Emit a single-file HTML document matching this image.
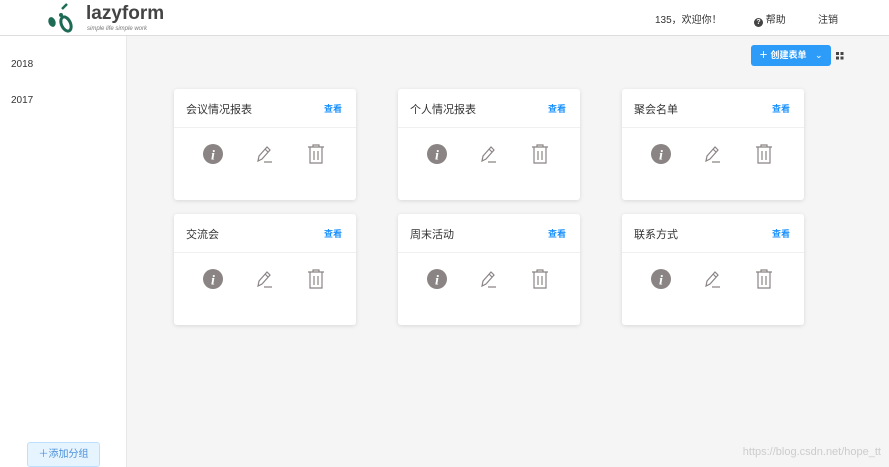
<!DOCTYPE html>
<html><head><meta charset="utf-8"><style>
*{margin:0;padding:0;box-sizing:border-box}
body{width:889px;height:467px;overflow:hidden;background:#f5f5f5;font-family:"Liberation Sans","Noto Sans CJK SC",sans-serif;position:relative;color:#333}
.hdr{position:absolute;left:0;top:0;width:889px;height:36px;background:#fff;border-bottom:1px solid #ddd}
.side{position:absolute;left:0;top:36px;width:127px;height:431px;background:#fff;border-right:1px solid #e8e8e8}
.side div{position:absolute;left:11px;font-size:10px;color:#333}
.card{position:absolute;width:182px;height:111px;background:#fff;border-radius:3px;box-shadow:0 1px 4px rgba(0,0,0,.12)}
.card .t{position:absolute;left:12px;top:12px;font-size:11px;color:#333}
.card .v{position:absolute;right:14px;top:13px;font-size:9px;color:#1890ff;font-weight:bold}
.card .ln{position:absolute;left:0;right:0;top:38px;border-top:1px solid #f0f0f0}
.card svg{position:absolute;left:0;top:0}
</style></head><body>
<div class="hdr">
<svg style="position:absolute;left:46px;top:2px" width="30" height="32" viewBox="0 0 30 32">
<ellipse cx="6" cy="20" rx="3.5" ry="5" fill="#1d6b55" transform="rotate(-20 6 20)"/>
<ellipse cx="20" cy="22" rx="4.5" ry="7.5" fill="none" stroke="#1d6b55" stroke-width="3" transform="rotate(-25 20 22)"/>
<circle cx="15" cy="13" r="2" fill="#1d6b55"/>
<path d="M16 7 L21 2" stroke="#1d6b55" stroke-width="2.5"/>
</svg>
<div style="position:absolute;left:86px;top:3px;font-size:19px;font-weight:bold;color:#444">lazyform</div>
<div style="position:absolute;left:87px;top:26px;font-size:6px;color:#777;font-style:italic">simple life simple work</div>
<div style="position:absolute;left:655px;top:11px;font-size:10px;color:#333">135，欢迎你！</div>
<div style="position:absolute;left:754px;top:11px;font-size:10px;color:#333"><span style="display:inline-block;width:9px;height:9px;border-radius:50%;background:#444;color:#fff;font-size:7px;text-align:center;line-height:9px;vertical-align:-1px;font-weight:bold">?</span> 帮助</div>
<div style="position:absolute;left:818px;top:11px;font-size:10px;color:#333">注销</div>
</div>
<div class="side"><div style="top:23px">2018</div><div style="top:59px">2017</div>
<div style="left:27px;top:406px;width:73px;height:25px;background:#e6f4ff;border:1px solid #bde0ff;border-radius:3px;color:#4a90d9;font-size:10px;text-align:center;line-height:23px">＋添加分组</div></div>
<div style="position:absolute;left:751px;top:45px;width:80px;height:21px;background:#2d9bf8;border-radius:3px;color:#fff;font-size:9px;font-weight:bold;line-height:21px;padding-left:8px">＋ 创建表单 <span style="font-weight:normal;margin-left:6px">⌄</span></div>
<svg style="position:absolute;left:836px;top:52px" width="8" height="8"><rect x="0" y="0" width="3" height="3" fill="#444"/><rect x="4.5" y="0" width="3" height="3" fill="#444"/><rect x="0" y="4.5" width="3" height="3" fill="#444"/><rect x="4.5" y="4.5" width="3" height="3" fill="#444"/></svg>

<div class="card" style="left:174px;top:89px"><div class="t">会议情况报表</div><div class="v">查看</div><div class="ln"></div>
<svg width="182" height="111"><circle cx="39" cy="65" r="10" fill="#8a8584"/><text x="39" y="70.5" font-size="14" font-weight="bold" font-style="italic" fill="#fff" text-anchor="middle" font-family="Liberation Serif">i</text>
<g fill="none" stroke="#8a8584" stroke-width="1.2"><path d="M84 72 L85 67 L93 58 L96 61 L88 70 Z M91 60 L94 63 M90 73 L98 73"/><path d="M134 58 L150 58 M139 58 L139 56 L145 56 L145 58 M136 58 L136 74 L148 74 L148 58 M140 62 L140 71 M144 62 L144 71"/></g></svg></div>

<div class="card" style="left:398px;top:89px"><div class="t">个人情况报表</div><div class="v">查看</div><div class="ln"></div>
<svg width="182" height="111"><circle cx="39" cy="65" r="10" fill="#8a8584"/><text x="39" y="70.5" font-size="14" font-weight="bold" font-style="italic" fill="#fff" text-anchor="middle" font-family="Liberation Serif">i</text>
<g fill="none" stroke="#8a8584" stroke-width="1.2"><path d="M84 72 L85 67 L93 58 L96 61 L88 70 Z M91 60 L94 63 M90 73 L98 73"/><path d="M134 58 L150 58 M139 58 L139 56 L145 56 L145 58 M136 58 L136 74 L148 74 L148 58 M140 62 L140 71 M144 62 L144 71"/></g></svg></div>

<div class="card" style="left:622px;top:89px"><div class="t">聚会名单</div><div class="v">查看</div><div class="ln"></div>
<svg width="182" height="111"><circle cx="39" cy="65" r="10" fill="#8a8584"/><text x="39" y="70.5" font-size="14" font-weight="bold" font-style="italic" fill="#fff" text-anchor="middle" font-family="Liberation Serif">i</text>
<g fill="none" stroke="#8a8584" stroke-width="1.2"><path d="M84 72 L85 67 L93 58 L96 61 L88 70 Z M91 60 L94 63 M90 73 L98 73"/><path d="M134 58 L150 58 M139 58 L139 56 L145 56 L145 58 M136 58 L136 74 L148 74 L148 58 M140 62 L140 71 M144 62 L144 71"/></g></svg></div>

<div class="card" style="left:174px;top:214px"><div class="t">交流会</div><div class="v">查看</div><div class="ln"></div>
<svg width="182" height="111"><circle cx="39" cy="65" r="10" fill="#8a8584"/><text x="39" y="70.5" font-size="14" font-weight="bold" font-style="italic" fill="#fff" text-anchor="middle" font-family="Liberation Serif">i</text>
<g fill="none" stroke="#8a8584" stroke-width="1.2"><path d="M84 72 L85 67 L93 58 L96 61 L88 70 Z M91 60 L94 63 M90 73 L98 73"/><path d="M134 58 L150 58 M139 58 L139 56 L145 56 L145 58 M136 58 L136 74 L148 74 L148 58 M140 62 L140 71 M144 62 L144 71"/></g></svg></div>

<div class="card" style="left:398px;top:214px"><div class="t">周末活动</div><div class="v">查看</div><div class="ln"></div>
<svg width="182" height="111"><circle cx="39" cy="65" r="10" fill="#8a8584"/><text x="39" y="70.5" font-size="14" font-weight="bold" font-style="italic" fill="#fff" text-anchor="middle" font-family="Liberation Serif">i</text>
<g fill="none" stroke="#8a8584" stroke-width="1.2"><path d="M84 72 L85 67 L93 58 L96 61 L88 70 Z M91 60 L94 63 M90 73 L98 73"/><path d="M134 58 L150 58 M139 58 L139 56 L145 56 L145 58 M136 58 L136 74 L148 74 L148 58 M140 62 L140 71 M144 62 L144 71"/></g></svg></div>

<div class="card" style="left:622px;top:214px"><div class="t">联系方式</div><div class="v">查看</div><div class="ln"></div>
<svg width="182" height="111"><circle cx="39" cy="65" r="10" fill="#8a8584"/><text x="39" y="70.5" font-size="14" font-weight="bold" font-style="italic" fill="#fff" text-anchor="middle" font-family="Liberation Serif">i</text>
<g fill="none" stroke="#8a8584" stroke-width="1.2"><path d="M84 72 L85 67 L93 58 L96 61 L88 70 Z M91 60 L94 63 M90 73 L98 73"/><path d="M134 58 L150 58 M139 58 L139 56 L145 56 L145 58 M136 58 L136 74 L148 74 L148 58 M140 62 L140 71 M144 62 L144 71"/></g></svg></div>

<div style="position:absolute;right:8px;bottom:9px;font-size:11px;color:#ccc">https://blog.csdn.net/hope_tt</div>
</body></html>
